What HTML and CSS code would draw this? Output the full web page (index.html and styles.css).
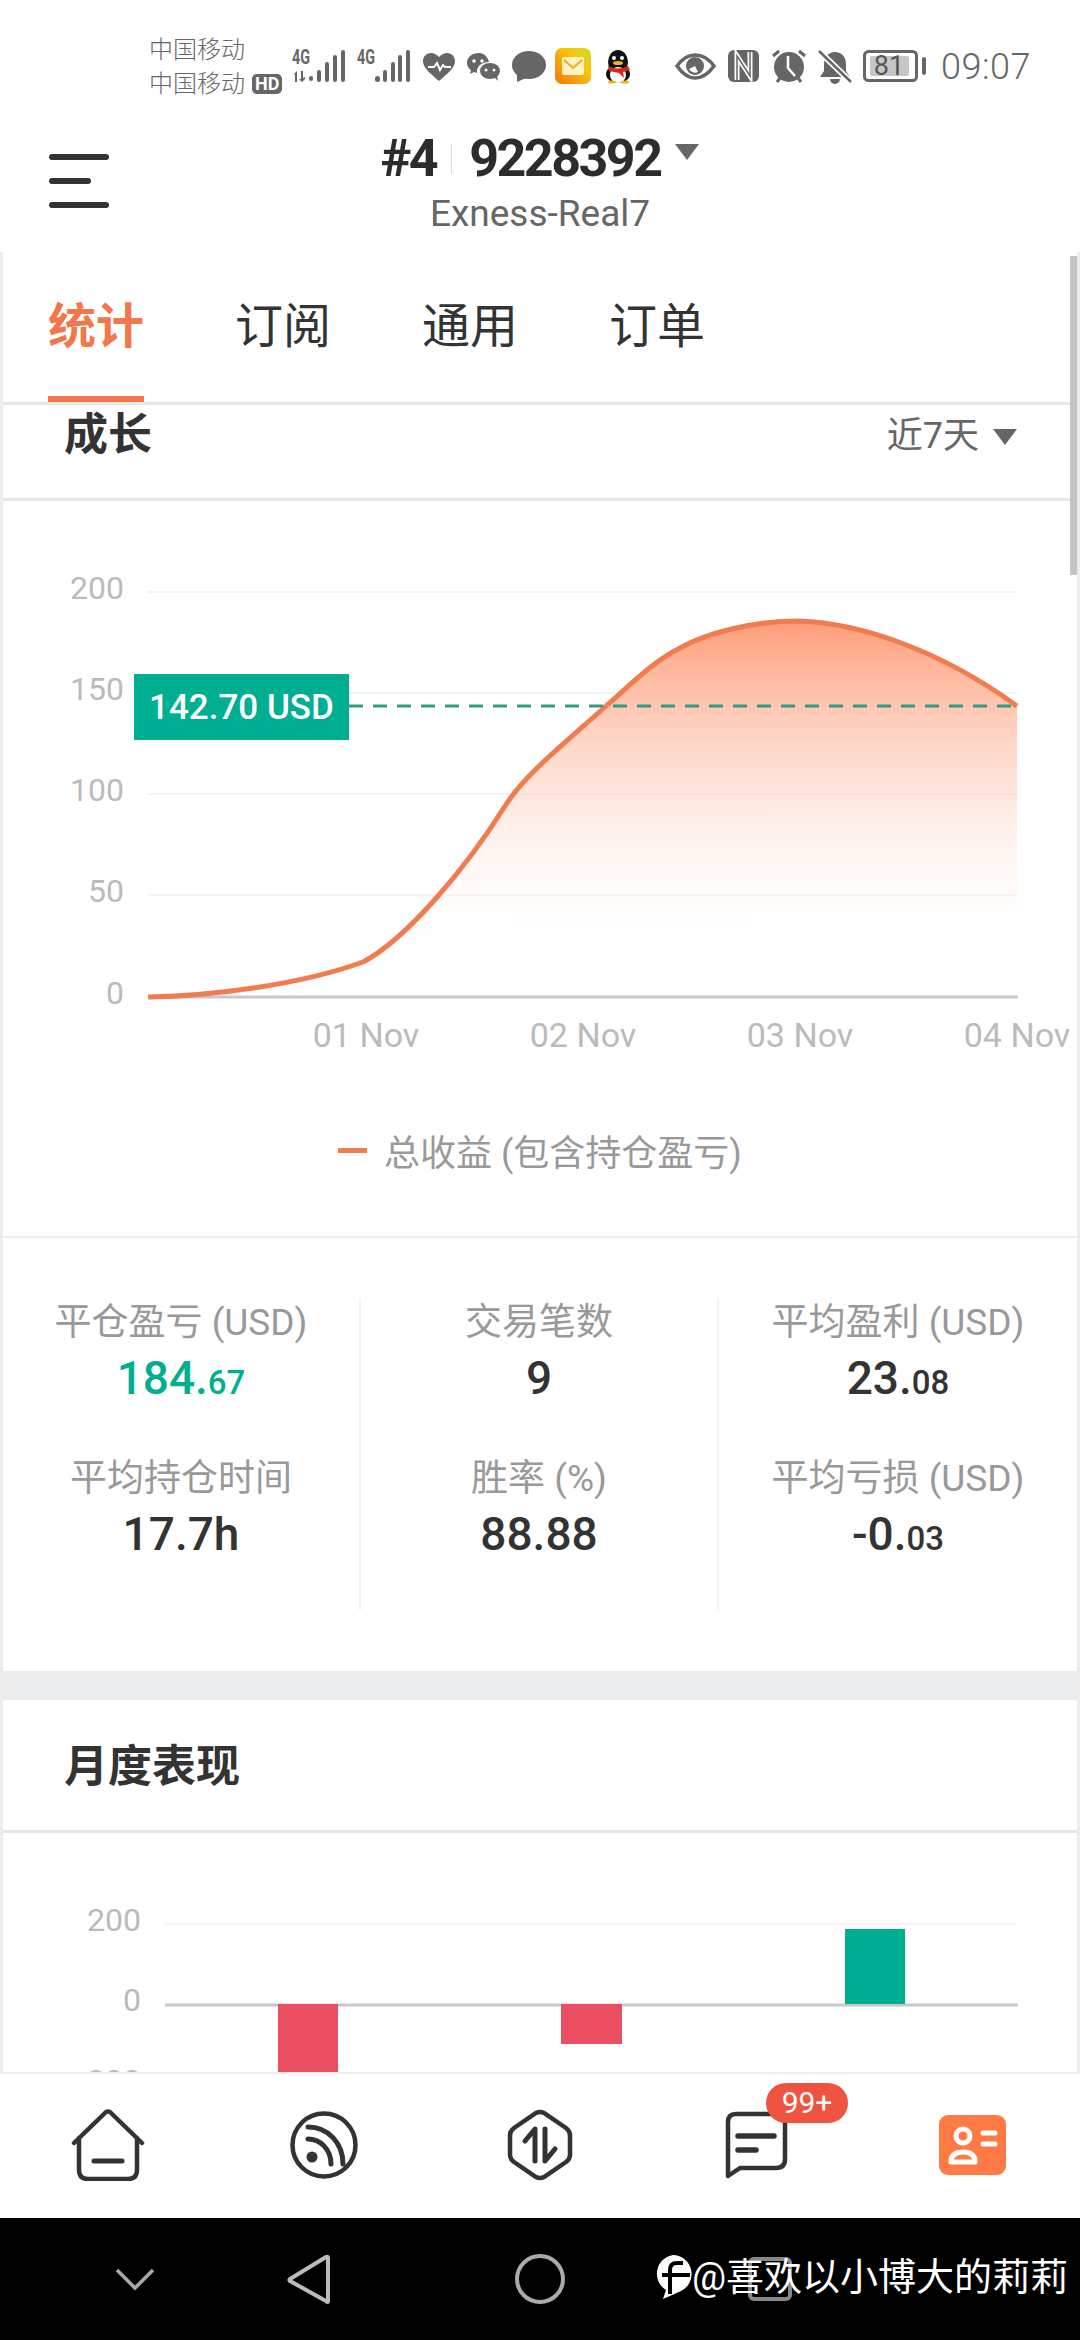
FILE: index.html
```html
<!DOCTYPE html>
<html lang="zh-CN">
<head>
    <meta charset="UTF-8">
    <meta name="viewport" content="width=device-width, initial-scale=1.0">
    <title>Exness-Real7</title>
    <link rel="stylesheet" href="styles.css">
</head>
<body>
    <div class="phone">
        <!-- Status bar -->
        <div class="status">
            <div class="carriers">
                <div>中国移动</div>
                <div class="carrier-hd">中国移动<span class="hd">HD</span></div>
            </div>
            <svg class="status-left" viewBox="285 40 355 50" width="355" height="50">
                <g fill="#666">
                    <text class="net" x="292" y="64" textLength="18" lengthAdjust="spacingAndGlyphs">4G</text>
                    <path d="M294 74l3-3v11h-2v-7zM301 71h2v7l2-1v2l-3 3-3-3h2z"/>
                    <rect x="309" y="76" width="4" height="5" rx="2"/>
                    <rect x="317" y="70" width="4" height="12" rx="2"/>
                    <rect x="325" y="62" width="4" height="20" rx="2"/>
                    <rect x="333" y="55" width="4" height="27" rx="2"/>
                    <rect x="341" y="50" width="4" height="32" rx="2"/>
                    <text class="net" x="357" y="64" textLength="18" lengthAdjust="spacingAndGlyphs">4G</text>
                    <rect x="375" y="76" width="5" height="6" rx="2.5"/>
                    <rect x="383" y="70" width="4" height="12" rx="2"/>
                    <rect x="391" y="62" width="4" height="20" rx="2"/>
                    <rect x="398" y="55" width="4" height="27" rx="2"/>
                    <rect x="406" y="50" width="4" height="32" rx="2"/>
                    <!-- heart -->
                    <path d="M439 81C430 73 423 68 423 61c0-5 4-8 8-8 3 0 6 2 8 4 2-2 5-4 8-4 4 0 8 3 8 8 0 7-7 12-16 20z"/>
                    <!-- wechat -->
                    <path d="M479 53c-7 0-12 4-12 10 0 3 2 6 4 7l-1 4 4-2 3 1c-1-6 4-11 12-11-1-5-5-9-10-9z"/>
                    <ellipse cx="490" cy="71" rx="10" ry="8"/>
                    <path d="M494 77l4 4-1-6z"/>
                    <!-- message bubble -->
                    <ellipse cx="529" cy="65" rx="17" ry="14"/>
                    <path d="M517 74l0 8 9-4z"/>
                </g>
                <path d="M428 67h6l3-4 3 7 3-5 2 2h6" fill="none" stroke="#fff" stroke-width="2"/>
                <g fill="#fff">
                    <circle cx="474" cy="61" r="1.8"/>
                    <circle cx="482" cy="61" r="1.8"/>
                    <circle cx="486" cy="70" r="1.5"/>
                    <circle cx="494" cy="70" r="1.5"/>
                </g>
                <!-- mail app -->
                <defs>
                    <linearGradient id="mailBg" x1="1" y1="0" x2="0" y2="1">
                        <stop offset="0" stop-color="#c8dc28"/>
                        <stop offset="0.35" stop-color="#fbc60c"/>
                        <stop offset="1" stop-color="#f97406"/>
                    </linearGradient>
                </defs>
                <rect x="555" y="48" width="36" height="36" rx="7" fill="url(#mailBg)"/>
                <rect x="562" y="57" width="22" height="18" rx="2" fill="#fff3c4"/>
                <path d="M564 60l9 8 9-8" fill="none" stroke="#f5a623" stroke-width="2"/>
                <!-- qq penguin -->
                <ellipse cx="618" cy="62" rx="10" ry="12" fill="#111"/>
                <ellipse cx="618" cy="74" rx="12" ry="9" fill="#111"/>
                <ellipse cx="618" cy="75" rx="8" ry="8" fill="#fff"/>
                <circle cx="614" cy="58" r="2" fill="#fff"/>
                <circle cx="622" cy="58" r="2" fill="#fff"/>
                <ellipse cx="618" cy="63" rx="5" ry="2" fill="#f5b30c"/>
                <path d="M608 66q10 5 20 0l2 4-7 2 1 6-5-5-10-2z" fill="#d9251c"/>
                <ellipse cx="612" cy="82" rx="4" ry="1.5" fill="#f5b30c"/>
                <ellipse cx="625" cy="82" rx="4" ry="1.5" fill="#f5b30c"/>
            </svg>
            <div class="status-right">
                <svg viewBox="670 40 260 50" width="260" height="50">
                    <!-- eye -->
                    <path d="M677 66c5-7 11-11 18-11s14 4 19 11c-5 7-12 12-19 12s-13-5-18-12z" fill="none" stroke="#666" stroke-width="3.5"/>
                    <circle cx="695" cy="66" r="9" fill="#666"/>
                    <path d="M689 69a7 7 0 0 0 9 3l-3-6z" fill="#fff"/>
                    <!-- nfc -->
                    <rect x="728" y="50" width="31" height="32" rx="6" fill="#666"/>
                    <path d="M737 80V56l13 20V52" fill="none" stroke="#fff" stroke-width="5"/>
                    <path d="M737 80V56l13 20V52" fill="none" stroke="#666" stroke-width="1.5"/>
                    <!-- alarm -->
                    <circle cx="789" cy="67" r="15" fill="#666"/>
                    <path d="M788 56v12l7 8" fill="none" stroke="#fff" stroke-width="2.5"/>
                    <path d="M773 56l6-5M805 56l-6-5M777 82l3-4M801 82l-3-4" stroke="#666" stroke-width="3" fill="none"/>
                    <!-- muted bell -->
                    <path d="M835 52c7 0 11 5 11 12v7l4 6h-30l4-6v-7c0-7 4-12 11-12z" fill="#666"/>
                    <path d="M830 79h10a5 5 0 0 1-10 0z" fill="#666"/>
                    <path d="M820 52l30 29" stroke="#fff" stroke-width="6"/>
                    <path d="M819 51l32 31" stroke="#666" stroke-width="2.5"/>
                    <!-- battery -->
                    <rect x="864.5" y="51.500" width="52" height="29" rx="4" fill="none" stroke="#666" stroke-width="3"/>
                    <rect x="870" y="56" width="39" height="20" rx="2" fill="#c6c6c6"/>
                    <text class="batt" x="889" y="75" text-anchor="middle">81</text>
                    <rect x="922" y="57" width="4" height="18" rx="2" fill="#666"/>
                </svg>
                <span class="clock">09:07</span>
            </div>
        </div>

        <!-- Account header -->
        <div class="header">
            <div class="menu">
                <span class="menu-line"></span>
                <span class="menu-line short"></span>
                <span class="menu-line"></span>
            </div>
            <div class="account">
                <div class="account-row">
                    <span>#4</span>
                    <span class="account-sep"></span>
                    <span>9228392</span>
                    <span class="caret caret-title"></span>
                </div>
                <div class="server">Exness-Real7</div>
            </div>
        </div>

        <!-- Scrolling content -->
        <div class="main">
            <div class="scrollbar"></div>
            <div class="tabs">
                <div class="tab active">统计</div>
                <div class="tab">订阅</div>
                <div class="tab">通用</div>
                <div class="tab">订单</div>
            </div>

            <div class="section-head growth-head">
                <div class="section-title">成长</div>
                <div class="range">近7天<span class="caret"></span></div>
            </div>

            <svg class="chart growth-chart" viewBox="3 501 1074 609" width="1074" height="609">
                <defs>
                    <linearGradient id="areaFill" gradientUnits="userSpaceOnUse" x1="0" y1="621" x2="0" y2="965">
                        <stop offset="0" stop-color="#ff9c78"/>
                        <stop offset="1" stop-color="#ffffff" stop-opacity="0"/>
                    </linearGradient>
                </defs>
                <g class="grid">
                    <line x1="148" y1="592" x2="1017" y2="592"/>
                    <line x1="148" y1="693" x2="1017" y2="693"/>
                    <line x1="148" y1="794" x2="1017" y2="794"/>
                    <line x1="148" y1="895" x2="1017" y2="895"/>
                </g>
                <line class="axis" x1="148" y1="997" x2="1018" y2="997"/>
                <g class="axis-label" text-anchor="end">
                    <text x="124" y="599">200</text>
                    <text x="124" y="700">150</text>
                    <text x="124" y="801">100</text>
                    <text x="124" y="902">50</text>
                    <text x="124" y="1004">0</text>
                </g>
                <g class="axis-label date-label" text-anchor="middle">
                    <text x="366" y="1047">01 Nov</text>
                    <text x="583" y="1047">02 Nov</text>
                    <text x="800" y="1047">03 Nov</text>
                    <text x="1017" y="1047">04 Nov</text>
                </g>
                <path fill="url(#areaFill)" d="M148 997C210 996 300 985 363 962C405 940 465 870 505 806C525 774 565 743 606 706C630 685 655 660 680 648C705 634 750 621 799 621C860 623 940 650 1017 706L1017 997Z"/>
                <path class="curve" d="M148 997C210 996 300 985 363 962C405 940 465 870 505 806C525 774 565 743 606 706C630 685 655 660 680 648C705 634 750 621 799 621C860 623 940 650 1017 706"/>
                <line class="price-line" x1="349" y1="706" x2="1017" y2="706"/>
                <rect x="134" y="674" width="215" height="66" fill="#00ae91"/>
                <text class="price-text" x="241.500" y="719" text-anchor="middle">142.70 USD</text>
            </svg>

            <div class="legend"><span class="legend-mark"></span>总收益 (包含持仓盈亏)</div>

            <div class="stats">
                <div class="stat">
                    <div class="stat-label">平仓盈亏 (USD)</div>
                    <div class="stat-value green">184.<small>67</small></div>
                </div>
                <div class="stat">
                    <div class="stat-label">交易笔数</div>
                    <div class="stat-value">9</div>
                </div>
                <div class="stat last">
                    <div class="stat-label">平均盈利 (USD)</div>
                    <div class="stat-value">23.<small>08</small></div>
                </div>
                <div class="stat">
                    <div class="stat-label">平均持仓时间</div>
                    <div class="stat-value">17.7h</div>
                </div>
                <div class="stat">
                    <div class="stat-label">胜率 (%)</div>
                    <div class="stat-value">88.88</div>
                </div>
                <div class="stat last">
                    <div class="stat-label">平均亏损 (USD)</div>
                    <div class="stat-value">-0.<small>03</small></div>
                </div>
            </div>

            <div class="band"></div>

            <div class="section-head monthly-head">
                <div class="section-title">月度表现</div>
            </div>

            <svg class="chart" viewBox="3 1833 1074 239" width="1074" height="239">
                <line class="grid-line" x1="165" y1="1924" x2="1017" y2="1924"/>
                <line class="axis" x1="165" y1="2005" x2="1018" y2="2005"/>
                <g class="axis-label" text-anchor="end">
                    <text x="141" y="1931">200</text>
                    <text x="141" y="2011">0</text>
                    <text x="141" y="2092">200</text>
                </g>
                <rect x="278" y="2004" width="60" height="68" fill="#ec4e62"/>
                <rect x="561" y="2004" width="61" height="40" fill="#ec4e62"/>
                <rect x="845" y="1929" width="60" height="75" fill="#00ae91"/>
            </svg>
        </div>

        <!-- Bottom navigation -->
        <div class="nav">
            <div class="nav-item">
                <svg viewBox="0 0 76 72" width="76" height="72" class="nav-icon">
                    <path d="M4 34L36 3q2-1 4 0l32 31M9 29v32q0 9 9 9h40q9 0 9-9V29" fill="none" stroke="#333" stroke-width="4.500" stroke-linecap="round" stroke-linejoin="round"/>
                    <path d="M24 52h28" stroke="#333" stroke-width="5" stroke-linecap="round"/>
                </svg>
            </div>
            <div class="nav-item">
                <svg viewBox="0 0 70 70" width="70" height="70" class="nav-icon">
                    <circle cx="35" cy="35" r="31.500" fill="none" stroke="#333" stroke-width="4.500"/>
                    <circle cx="23" cy="47" r="5.500" fill="#333"/>
                    <path d="M19 29c12 0 23 10 23 25M19 17c20 0 35 16 35 37" fill="none" stroke="#333" stroke-width="5" stroke-linecap="round"/>
                </svg>
            </div>
            <div class="nav-item">
                <svg viewBox="0 0 66 72" width="66" height="72" class="nav-icon">
                    <path d="M29 4q4-2 8 0l22 15q4 3 4 7v20q0 4-4 7L37 68q-4 2-8 0L7 53q-4-3-4-7V26q0-4 4-7z" fill="none" stroke="#333" stroke-width="4.500"/>
                    <path d="M28 52V20L18 32M38 20v32l10-12" fill="none" stroke="#333" stroke-width="5" stroke-linecap="round" stroke-linejoin="round"/>
                </svg>
            </div>
            <div class="nav-item">
                <div class="message-icon">
                    <svg viewBox="0 0 64 68" width="64" height="68" class="nav-icon">
                        <path d="M12 3h40q9 0 9 9v36q0 9-9 9H16L4 65V11q0-8 8-8z" fill="none" stroke="#333" stroke-width="4.500" stroke-linejoin="round"/>
                        <path d="M14 25h36M14 39h18" stroke="#333" stroke-width="5.500" stroke-linecap="round"/>
                    </svg>
                    <span class="badge">99+</span>
                </div>
            </div>
            <div class="nav-item">
                <svg viewBox="0 0 67 60" width="67" height="60" class="nav-icon">
                    <rect width="67" height="60" rx="9" fill="#ff7a45"/>
                    <circle cx="24" cy="21" r="7" fill="none" stroke="#fff" stroke-width="5"/>
                    <path d="M12 47q0-10 12-10t12 10z" fill="none" stroke="#fff" stroke-width="5" stroke-linejoin="round"/>
                    <path d="M44 18h12M44 29h12" stroke="#fff" stroke-width="5" stroke-linecap="round"/>
                </svg>
            </div>
        </div>

        <!-- System navigation -->
        <div class="sysnav">
            <svg viewBox="0 2218 1080 122" width="1080" height="122">
                <path d="M117 2270l18 18 18-18" fill="none" stroke="#aaa" stroke-width="3.500"/>
                <path d="M328 2258v43q0 2-2 0l-36-20q-1-1 0-2l36-22q2-1 2 1z" fill="none" stroke="#bbb" stroke-width="4" stroke-linejoin="round"/>
                <circle cx="540" cy="2279" r="23" fill="none" stroke="#aaa" stroke-width="4"/>
                <rect x="750" y="2259" width="40" height="40" rx="4" fill="none" stroke="#888" stroke-width="4"/>
            </svg>
            <div class="watermark">
                <svg viewBox="0 0 38 44" width="38" height="44">
                    <path d="M19 0a19 19 0 0 1 7 36.500L9 44l3-9A19 19 0 0 1 19 0z" fill="#fff"/>
                    <path d="M29 8h-6q-7 0-7 7v24M8 20h28" fill="none" stroke="#000" stroke-width="4"/>
                </svg>
                <span>@喜欢以小博大的莉莉</span>
            </div>
        </div>
    </div>
</body>
</html>
```

FILE: styles.css
```css
* {
    box-sizing: border-box;
}

html, body {
    margin: 0;
    padding: 0;
    background-color: #fff;
}

body {
    font-family: Roboto, "Noto Sans CJK SC", sans-serif;
    color: #333;
}

svg {
    display: block;
}

.phone {
    width: 1080px;
    height: 2340px;
    display: flex;
    flex-direction: column;
    overflow: hidden;
    position: relative;
}

/* status bar */
.status {
    height: 110px;
    flex: none;
    display: flex;
    align-items: center;
    padding: 20px 0 0 149px;
    color: #666;
}

.carriers {
    width: 136px;
    font-size: 24px;
    line-height: 34px;
    font-weight: 300;
    margin-top: 4px;
}

.carrier-hd {
    display: flex;
    align-items: center;
    white-space: nowrap;
}

.hd {
    background-color: #666;
    color: #fff;
    font-size: 18px;
    font-weight: 700;
    line-height: 20px;
    padding: 0 3px;
    border-radius: 5px;
    margin-left: 7px;
}

.status-left {
    flex: none;
}

.status-right {
    margin-left: 30px;
    display: flex;
    align-items: center;
}

.net {
    font: 700 20px Roboto, sans-serif;
}

.batt {
    font: 400 27px Roboto, sans-serif;
    fill: #555;
}

.clock {
    margin-left: 11px;
    font-size: 36px;
    font-weight: 300;
    letter-spacing: 0.5px;
    position: relative;
    top: 2px;
}

/* header */
.header {
    height: 142px;
    flex: none;
    display: grid;
    grid-template-columns: 1fr auto 1fr;
    align-items: center;
    padding-left: 49px;
}

.menu {
    display: flex;
    flex-direction: column;
    gap: 18px;
}

.menu-line {
    display: block;
    width: 60px;
    height: 6px;
    border-radius: 3px;
    background-color: #333;
}

.menu-line.short {
    width: 42px;
}

.account {
    padding-top: 2px;
    margin-left: -49px;
    text-align: center;
}

.account-row {
    display: flex;
    align-items: center;
    font-size: 52px;
    font-weight: 700;
    line-height: 56px;
    letter-spacing: -2.5px;
    color: #2c2c2c;
}

.account-sep {
    width: 1px;
    height: 30px;
    background-color: #ddd;
    margin: 0 17px 0 15px;
}

.caret {
    display: inline-block;
    width: 0;
    height: 0;
    border-left: 12px solid transparent;
    border-right: 12px solid transparent;
    border-top: 16px solid #666;
    margin-left: 15px;
    vertical-align: 3px;
}

.caret-title {
    margin-top: -14px;
}

.server {
    margin-top: 7px;
    font-size: 37px;
    line-height: 40px;
    color: #666;
}

/* content */
.main {
    flex: 1;
    position: relative;
    overflow: hidden;
    border-left: 3px solid #ececec;
    border-right: 3px solid #ececec;
}

.scrollbar {
    position: absolute;
    top: 4px;
    right: -3px;
    width: 10px;
    height: 319px;
    background-color: #c4c4c4;
}

.tabs {
    display: flex;
    gap: 91px;
    padding-left: 45px;
    border-bottom: 3px solid #e6e6e6;
}

.tab {
    padding: 50px 0 45px;
    font-size: 48px;
    line-height: 49px;
    border-bottom: 6px solid transparent;
}

.tab.active {
    color: #f4774c;
    font-weight: 700;
    border-bottom-color: #f4774c;
}

.section-head {
    display: flex;
    justify-content: space-between;
    border-bottom: 3px solid #e6e6e6;
    padding: 0 60px 0 61px;
}

.growth-head {
    height: 96px;
    padding-top: 4px;
    align-items: flex-start;
}

.monthly-head {
    height: 133px;
    align-items: center;
    padding-top: 3px;
}

.section-title {
    font-size: 44px;
    font-weight: 700;
    line-height: 52px;
    color: #333;
}

.range {
    font-size: 36px;
    line-height: 52px;
    color: #666;
    margin-top: 1px;
}

.range .caret {
    margin-left: 14px;
}

.chart {
    flex: none;
}

.grid line, .grid-line {
    stroke: #f4f4f4;
    stroke-width: 2;
}

.axis {
    stroke: #c8c8c8;
    stroke-width: 3;
}

.axis-label text {
    font: 400 32px Roboto, sans-serif;
    fill: #bbb;
}

.date-label text {
    font-size: 34px;
}

.curve {
    fill: none;
    stroke: #f07c50;
    stroke-width: 5;
}

.price-line {
    stroke: #2a9d82;
    stroke-width: 3;
    stroke-dasharray: 14 10;
}

.price-text {
    font: 500 35px Roboto, sans-serif;
    fill: #fff;
}

.legend {
    height: 80px;
    display: flex;
    align-items: center;
    justify-content: center;
    font-size: 36px;
    color: #999;
    margin-bottom: 46px;
}

.legend-mark {
    width: 29px;
    height: 5px;
    background-color: #f07c50;
    margin-right: 17px;
}

.stats {
    display: grid;
    grid-template-columns: 358px 358px 1fr;
    padding: 60px 0 61px;
    border-top: 2px solid #eee;
}

.stat {
    height: 156px;
    text-align: center;
    border-right: 2px solid #f2f2f2;
}

.stat.last {
    border-right: none;
}

.stat-label {
    font-size: 37px;
    line-height: 50px;
    color: #999;
}

.stat-value {
    margin-top: 4px;
    font-size: 46px;
    line-height: 52px;
    font-weight: 500;
    color: #333;
}

.stat-value small {
    font-size: 33px;
}

.stat-value.green {
    color: #00ae91;
}

.band {
    height: 29px;
    background-color: #ebeced;
}

/* bottom nav */
.nav {
    height: 146px;
    flex: none;
    display: flex;
    align-items: center;
    padding-bottom: 3px;
    border-top: 2px solid #eee;
    background-color: #fff;
}

.nav-item {
    flex: 1;
    display: flex;
    justify-content: center;
}

.message-icon {
    position: relative;
}

.badge {
    position: absolute;
    top: -28px;
    left: 42px;
    width: 82px;
    height: 40px;
    border-radius: 20px;
    background-color: #ef5341;
    color: #fff;
    font-size: 30px;
    line-height: 40px;
    text-align: center;
}

/* system nav */
.sysnav {
    height: 122px;
    flex: none;
    background-color: #000;
    position: relative;
}

.watermark {
    position: absolute;
    left: 654px;
    top: 37px;
    display: flex;
    align-items: center;
    gap: 0;
    color: #fff;
    font-size: 38px;
    line-height: 44px;
    white-space: nowrap;
}
```
